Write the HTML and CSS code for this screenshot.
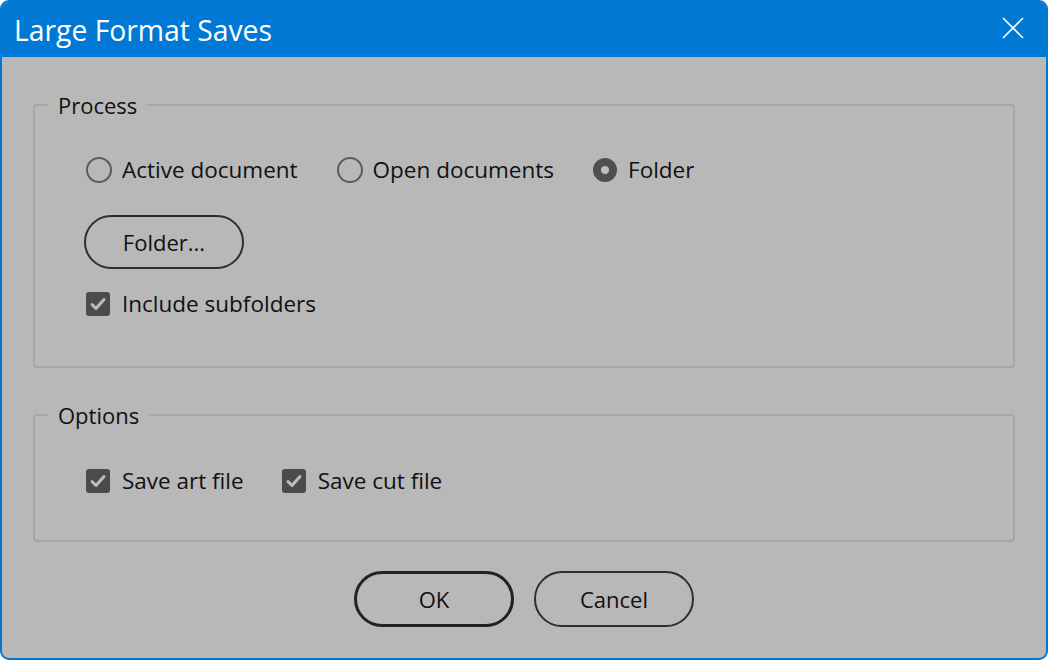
FILE: index.html
```html
<!DOCTYPE html>
<html>
<head>
<meta charset="utf-8">
<title>Large Format Saves</title>
<link rel="stylesheet" href="styles.css">
</head>
<body>
<div class="window">
  <div class="titlebar">
    <span class="title">Large Format Saves</span>
    <svg class="close" width="22" height="22" viewBox="0 0 22 22"><path d="M1 1 L21 21 M21 1 L1 21" stroke="#fff" stroke-width="1.6" fill="none"/></svg>
  </div>
  <div class="content">
    <fieldset class="group group-process">
      <legend>Process</legend>
      <div class="group-body body-process">
        <div class="radio-row">
          <label class="radio"><span class="radio-dot"></span><span class="lbl">Active document</span></label>
          <label class="radio"><span class="radio-dot"></span><span class="lbl">Open documents</span></label>
          <label class="radio"><span class="radio-dot checked"></span><span class="lbl">Folder</span></label>
        </div>
        <button class="btn btn-folder">Folder...</button>
        <label class="check check-sub"><span class="box"><svg width="24" height="24" viewBox="0 0 24 24"><path d="M6 12.5 L10 16.5 L18 7.5" stroke="#bdbdbd" stroke-width="3" fill="none" stroke-linecap="round" stroke-linejoin="round"/></svg></span><span class="lbl">Include subfolders</span></label>
      </div>
    </fieldset>
    <fieldset class="group group-options">
      <legend>Options</legend>
      <div class="group-body body-options">
        <div class="check-row">
          <label class="check"><span class="box"><svg width="24" height="24" viewBox="0 0 24 24"><path d="M6 12.5 L10 16.5 L18 7.5" stroke="#bdbdbd" stroke-width="3" fill="none" stroke-linecap="round" stroke-linejoin="round"/></svg></span><span class="lbl">Save art file</span></label>
          <label class="check"><span class="box"><svg width="24" height="24" viewBox="0 0 24 24"><path d="M6 12.5 L10 16.5 L18 7.5" stroke="#bdbdbd" stroke-width="3" fill="none" stroke-linecap="round" stroke-linejoin="round"/></svg></span><span class="lbl">Save cut file</span></label>
        </div>
      </div>
    </fieldset>
    <div class="buttons">
      <button class="btn btn-ok">OK</button>
      <button class="btn btn-cancel">Cancel</button>
    </div>
  </div>
</div>
</body>
</html>
```
FILE: styles.css
```css
* { box-sizing: border-box; }
html, body { margin: 0; padding: 0; background: #ffffff; }
body {
  width: 1048px;
  height: 660px;
  overflow: hidden;
  font-family: "Open Sans", "Noto Sans", sans-serif;
  color: #111111;
}
.window {
  width: 1048px;
  height: 660px;
  border: 2px solid #0078d4;
  border-radius: 9px;
  background: #b8b8b8;
  overflow: hidden;
  display: flex;
  flex-direction: column;
}
.titlebar {
  height: 55px;
  background: #0078d4;
  display: flex;
  align-items: center;
  justify-content: space-between;
  padding: 0 22px 0 12px;
  flex: none;
}
.title {
  color: #ffffff;
  font-size: 28.3px;
  line-height: 34px;
  margin-top: 1px;
}
.close { display: block; margin-top: -4px; }
.content {
  padding: 36px 31px 0 31px;
  display: flex;
  flex-direction: column;
}
.group {
  margin: 0;
  border: 2px solid #a6a6a6;
  border-radius: 4px;
  padding: 0;
  min-width: 0;
}
.group legend {
  font-size: 22px;
  line-height: 24px;
  padding: 0 10px 0 10px;
  margin-left: 13px;
}
.group-body {
  padding-left: 51px;
}
.body-process {
  padding-top: 40px;
  padding-bottom: 49px;
  display: flex;
  flex-direction: column;
  align-items: flex-start;
}
.group-options {
  margin-top: 35px;
}
.body-options {
  padding-top: 41px;
  padding-bottom: 46px;
}
.radio-row {
  display: flex;
  align-items: center;
  gap: 39px;
  height: 26px;
}
.radio, .check {
  display: flex;
  align-items: center;
  gap: 10px;
  font-size: 22.5px;
  line-height: 26px;
}
.check { gap: 12px; }
.radio-dot {
  width: 26px;
  height: 26px;
  border-radius: 50%;
  border: 2px solid #5c5c5c;
  flex: none;
}
.radio-dot.checked {
  width: 24px;
  height: 24px;
  margin: 0 1px 0 0;
  border: 8px solid #4f4f4f;
  background: #bdbdbd;
}
.box {
  width: 24px;
  height: 24px;
  border-radius: 3px;
  background: #4b4b4b;
  flex: none;
  display: block;
}
.box svg { display: block; }
.btn {
  font-family: "Open Sans", "Noto Sans", sans-serif;
  font-size: 22px;
  color: #111111;
  background: transparent;
  border: 2px solid #2e2e2e;
  border-radius: 28px;
  width: 160px;
  padding: 0;
}
.btn-folder {
  height: 54px;
  margin-top: 32px;
  margin-left: -2px;
}
.check-sub { margin-top: 22px; }
.check-row {
  display: flex;
  align-items: center;
  gap: 38px;
  height: 26px;
}
.buttons {
  display: flex;
  justify-content: center;
  gap: 20px;
  margin-top: 29px;
}
.btn-ok, .btn-cancel { height: 56px; }
.btn-ok { border: 3px solid #222222; }
```
